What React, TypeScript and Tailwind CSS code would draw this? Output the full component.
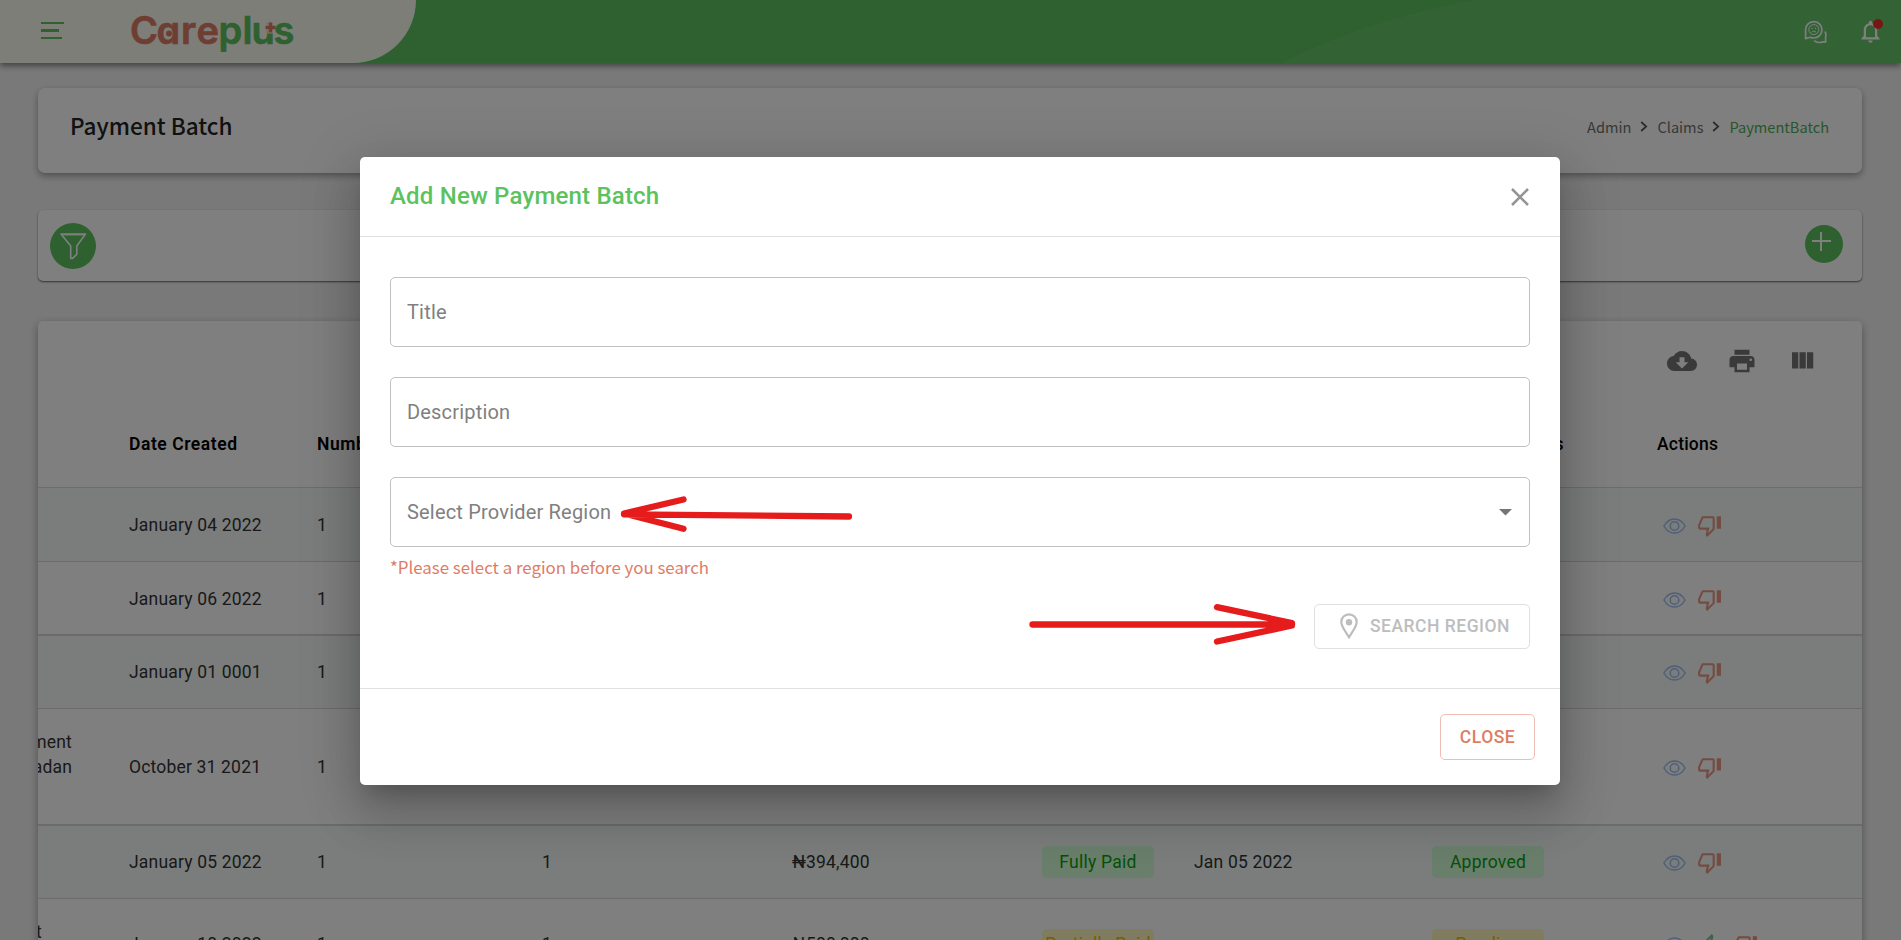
import React from "react";

type Status = { label: string; tone: "green" | "yellow" };

type Row = {
  name: string[];
  nameClass?: string;
  date: string;
  providers: string;
  claims: string;
  amount: string;
  payment: Status;
  paidOn: string;
  approval: Status;
  approve?: boolean;
  rowClass: string;
};

const paid: Status = { label: "Fully Paid", tone: "green" };
const approved: Status = { label: "Approved", tone: "green" };

const rows: Row[] = [
  { name: [], date: "January 04 2022", providers: "1", claims: "1", amount: "₦394,400", payment: paid, paidOn: "Jan 04 2022", approval: approved, rowClass: "h-[74px] border-b bg-[#f5faf7] pt-px" },
  { name: [], date: "January 06 2022", providers: "1", claims: "1", amount: "₦394,400", payment: paid, paidOn: "Jan 06 2022", approval: approved, rowClass: "h-[74px] border-b-2 bg-white pt-[2px]" },
  { name: [], date: "January 01 0001", providers: "1", claims: "1", amount: "₦394,400", payment: paid, paidOn: "Jan 01 2022", approval: approved, rowClass: "h-[73px] border-b bg-[#f5faf7]" },
  { name: ["ment", "adan", "\u00a0"], date: "October 31 2021", providers: "1", claims: "1", amount: "₦394,400", payment: paid, paidOn: "Oct 31 2021", approval: approved, rowClass: "h-[117px] border-b-2 bg-white pt-px" },
  { name: [], date: "January 05 2022", providers: "1", claims: "1", amount: "₦394,400", payment: paid, paidOn: "Jan 05 2022", approval: approved, rowClass: "h-[73px] border-b bg-[#f5faf7]" },
  { name: ["t", "\u00a0"], nameClass: "pr-[30px]", date: "January 10 2022", providers: "1", claims: "1", amount: "₦500,000", payment: { label: "Partially Paid", tone: "yellow" }, paidOn: "", approval: { label: "Pending", tone: "yellow" }, approve: true, rowClass: "h-[92px] border-b bg-white" },
];

const columns = "grid grid-cols-[91px_188px_225px_250px_250px_152px_238px_225px_1fr]";

function Logo() {
  return (
    <svg width="166" height="44" viewBox="0 0 166 44" className="block overflow-visible">
      <g className="font-['Inter',sans-serif] text-[38px] font-semibold [font-feature-settings:'cv11']">
        <text x="-1 25.500 50 65.500" y="34" fill="#de7c66" stroke="#de7c66" strokeWidth="0.700">Care</text>
        <text x="87.500 111.500 120.500 142.500" y="34" fill="#5cc25e" stroke="#5cc25e" strokeWidth="0.700">plus</text>
      </g>
      <circle cx="38" cy="23.500" r="3" fill="#de7c66" />
      <path d="M139.500 11v12.500M133 17.500h10" stroke="#fcfcf2" strokeWidth="6" />
      <path d="M139.500 12.500v10M134.500 17.500h10" stroke="#de7c66" strokeWidth="3.600" />
    </svg>
  );
}

function ChatIcon() {
  return (
    <svg width="24" height="24" viewBox="0 0 24 24" fill="none" stroke="#fff" strokeLinejoin="round">
      <path d="M1.600 18.600V9.600a8.200 8.200 0 1 1 8.200 8.400c-1.400 0-2.600-.3-3.500-.8z" strokeWidth="1.700" />
      <path d="M21 11.500c.9 1.600 1.100 3.500.6 5.400v5h-2.700c-2.800.9-6.400.8-8.900-1.300" strokeWidth="1.700" />
      <circle cx="9.800" cy="9.600" r="5" strokeWidth="1" />
      <path d="M8 7.800v1.200M11.600 7.800v1.200M7.600 12.200c1.200-1.300 3.200-1.300 4.400 0" strokeWidth="1" />
    </svg>
  );
}

function BellIcon() {
  return (
    <svg width="27" height="27" viewBox="0 0 24 24" fill="#fff">
      <path d="M12 22c1.100 0 2-.9 2-2h-4c0 1.100.9 2 2 2zm6-6v-5c0-3.070-1.630-5.640-4.500-6.320V4c0-.83-.67-1.500-1.500-1.500s-1.500.67-1.500 1.500v.68C7.640 5.360 6 7.920 6 11v5l-2 2v1h16v-1l-2-2zm-2 1H8v-6c0-2.480 1.510-4.500 4-4.500s4 2.020 4 4.500v6z" />
    </svg>
  );
}

function FunnelIcon() {
  return (
    <svg width="27" height="27" viewBox="0 0 27 27" fill="none" stroke="#fff" strokeWidth="1.600" strokeLinejoin="round" className="ml-px mt-px">
      <path d="M1 1H25.500L16.800 13V21.200L12.600 25.400H10.700V13Z" />
      <path d="M2.500 1.700H24" strokeWidth="1.400" />
    </svg>
  );
}

function EyeIcon() {
  return (
    <svg width="23" height="16" viewBox="0 0 23 16" fill="none" stroke="#a0bff0" strokeWidth="1.500">
      <path d="M.9 8C3.600 3.300 7.200.9 11.500.9S19.400 3.300 22.100 8c-2.700 4.700-6.300 7.100-10.600 7.100S3.600 12.700.9 8Z" />
      <circle cx="11.500" cy="8" r="4.300" />
    </svg>
  );
}

function ThumbDownIcon() {
  return (
    <svg width="25" height="25" viewBox="0 0 24 24" fill="#e89681">
      <path d="M15 3H6c-.83 0-1.540.5-1.840 1.220l-3.020 7.050c-.09.23-.14.47-.14.73v2c0 1.100.9 2 2 2h6.310l-.95 4.570-.03.32c0 .41.17.79.44 1.060L9.830 23l6.590-6.590c.36-.36.58-.86.58-1.410V5c0-1.100-.9-2-2-2zm0 12l-4.340 4.340L12 14H3v-2l3-7h9v10zm4-12h4v12h-4z" />
    </svg>
  );
}

function ThumbUpIcon() {
  return (
    <svg width="25" height="25" viewBox="0 0 24 24" fill="#6fce80">
      <path d="M9 21h9c.83 0 1.540-.5 1.840-1.220l3.020-7.050c.09-.23.14-.47.14-.73v-2c0-1.100-.9-2-2-2h-6.310l.95-4.570.03-.32c0-.41-.17-.79-.44-1.060L14.170 1 7.580 7.590C7.220 7.950 7 8.450 7 9v10c0 1.100.9 2 2 2zM9 9l4.340-4.340L12 10h9v2l-3 7H9V9zM1 9h4v12H1z" />
    </svg>
  );
}

function Badge({ status }: { status: Status }) {
  const tone = status.tone === "green" ? "bg-[#d4fdd9] text-[#08a00e]" : "bg-[#fff8be] text-[#f5b800]";
  return <span className={`flex h-8 w-28 items-center justify-center whitespace-nowrap rounded-[5px] tracking-[0.25px] ${tone}`}>{status.label}</span>;
}

function Header() {
  return (
    <header className="relative z-10 flex h-[63px] shrink-0 items-center justify-between bg-[#5cc25e] shadow-[0_3px_6px_rgba(0,0,0,0.45)]">
      <svg className="absolute right-0 top-0" width="621" height="63" viewBox="0 0 621 63">
        <path d="M2 63C50 37 122 13 196 0H621V63Z" fill="#66c468" />
      </svg>
      <div className="flex h-full w-[416px] items-center rounded-br-[63px] bg-[#fcfcf2] pl-[41px]">
        <div className="-mt-[2px] flex flex-col gap-[5px]">
          <span className="h-[2px] w-[23px] bg-[#5cc25e]" />
          <span className="h-[3px] w-[18px] bg-[#5cc25e]" />
          <span className="h-[2px] w-[21px] bg-[#5cc25e]" />
        </div>
        <div className="pl-[67px]">
          <Logo />
        </div>
      </div>
      <div className="relative flex items-center gap-[29px] pr-[17px]">
        <ChatIcon />
        <div className="relative">
          <BellIcon />
          <span className="absolute left-[16px] top-px size-[10px] rounded-full bg-[#f02c2c]" />
        </div>
      </div>
    </header>
  );
}

function Chevron() {
  return (
    <svg width="8" height="11" viewBox="0 0 8 11" fill="none" stroke="#555" strokeWidth="1.700">
      <path d="M1.200 1l5 4.500-5 4.500" />
    </svg>
  );
}

function Table() {
  return (
    <section className="mt-[40px] h-[700px] shrink-0 overflow-hidden rounded-[5px] bg-white font-['Roboto',sans-serif] text-[17.5px] tracking-[0.18px] text-[#333] shadow-[0_3px_8px_rgba(0,0,0,0.35)]">
      <div className="flex h-[84px] justify-end gap-[30px] pr-[45px] pt-[25px]">
        <svg width="30" height="30" viewBox="0 0 24 24" fill="#757575">
          <path d="M19.350 10.040C18.670 6.590 15.640 4 12 4 9.110 4 6.600 5.640 5.350 8.040 2.340 8.360 0 10.910 0 14c0 3.310 2.690 6 6 6h13c2.760 0 5-2.240 5-5 0-2.640-2.050-4.780-4.650-4.960zM17 13l-5 5-5-5h3V9h4v4h3z" />
        </svg>
        <svg width="30" height="30" viewBox="0 0 24 24" fill="#757575">
          <path d="M19 8H5c-1.660 0-3 1.340-3 3v6h4v4h12v-4h4v-6c0-1.660-1.340-3-3-3zm-3 11H8v-5h8v5zm3-7c-.55 0-1-.45-1-1s.45-1 1-1 1 .45 1 1-.45 1-1 1zm-1-9H6v4h12V3z" />
        </svg>
        <svg width="30" height="30" viewBox="0 0 24 24" fill="#757575">
          <path d="M10 18h5V5h-5v13zm-6 0h5V5H4v13zM16 5v13h5V5h-5z" />
        </svg>
      </div>
      <div className={`${columns} h-[83px] items-center border-b border-[#d8d8d8] pb-[4px] font-semibold tracking-[0.55px] text-black`}>
        <span />
        <span>Date Created</span>
        <span>Number</span>
        <span>Claims</span>
        <span>Amount</span>
        <span>Payment</span>
        <span>Date</span>
        <span className="w-[132px] text-right">Status</span>
        <span className="font-medium tracking-[0.2px]">Actions</span>
      </div>
      {rows.map((row) => (
        <div key={row.date} className={`${columns} items-center border-[#d6d6d6] ${row.rowClass}`}>
          <div className={`flex w-[34px] flex-col items-end leading-[25px] ${row.nameClass ?? ""}`}>
            {row.name.map((line) => (
              <span key={line}>{line}</span>
            ))}
          </div>
          <span>{row.date}</span>
          <span>{row.providers}</span>
          <span>{row.claims}</span>
          <span>{row.amount}</span>
          <Badge status={row.payment} />
          <span>{row.paidOn}</span>
          <Badge status={row.approval} />
          <div className="flex items-center gap-[11px] pl-[6px] pt-px">
            <EyeIcon />
            {row.approve && <ThumbUpIcon />}
            <ThumbDownIcon />
          </div>
        </div>
      ))}
    </section>
  );
}

function Field({ label, select = false }: { label: string; select?: boolean }) {
  return (
    <div className="flex h-[70px] items-center justify-between rounded-[5px] border border-[#c0c0c0] pl-[16px] pr-[17px] text-[20px] tracking-[0.19px] text-[#808080]">
      <span>{label}</span>
      {select && (
        <svg width="13" height="7" viewBox="0 0 13 7" fill="#757575">
          <path d="M0 0h13L6.500 6.500z" />
        </svg>
      )}
    </div>
  );
}

function Dialog() {
  return (
    <div className="relative flex h-[628px] w-[1200px] flex-col rounded-[5px] bg-white font-['Roboto',sans-serif] shadow-[0_14px_19px_-9px_rgba(0,0,0,0.2),0_30px_48px_4px_rgba(0,0,0,0.14),0_11px_58px_10px_rgba(0,0,0,0.12)]">
      <div className="flex h-20 items-center justify-between border-b border-[#e0e0e0] pl-[30px] pr-[31px]">
        <h2 className="-mt-[2px] text-[24px] font-medium tracking-[0.19px] text-[#5cc25e]">Add New Payment Batch</h2>
        <svg width="18" height="18" viewBox="0 0 18 18" stroke="#949494" strokeWidth="2.500">
          <path d="M1 1l16 16M17 1L1 17" />
        </svg>
      </div>
      <div className="flex h-[452px] flex-col gap-[30px] border-b border-[#e0e0e0] px-[30px] pt-10">
        <Field label="Title" />
        <Field label="Description" />
        <div>
          <Field label="Select Provider Region" select />
          <p className="mt-[7px] font-['Noto_Sans_CJK_SC',sans-serif] text-[16.85px] leading-[26px] text-[#de7c66]">*Please select a region before you search</p>
          <div className="mt-[24px] flex justify-end">
            <button className="flex h-[45px] w-[216px] items-center gap-[12px] rounded-[5px] border border-[#e0e0e0] pl-[25px] text-[17.5px] font-medium tracking-[0.5px] text-[#bdbdbd]">
              <svg width="18" height="26" viewBox="0 0 18 26" fill="none" className="mb-[2px] shrink-0">
                <path d="M9 1.300c-4.300 0-7.700 3.300-7.700 7.600C1.300 13.600 5.800 18.500 9 24.300c3.200-5.800 7.700-10.700 7.700-15.400C16.700 4.600 13.300 1.300 9 1.300Z" stroke="#bdbdbd" strokeWidth="2.200" />
                <circle cx="9" cy="9.200" r="3.200" fill="#bdbdbd" />
              </svg>
              <span className="whitespace-nowrap">SEARCH REGION</span>
            </button>
          </div>
        </div>
      </div>
      <div className="flex justify-end pr-[25px] pt-[25px]">
        <button className="h-[46px] w-[95px] rounded-[5px] border border-[#f0bdb2] text-[17.5px] font-medium tracking-[0.5px] text-[#de7c66]">CLOSE</button>
      </div>
      <svg className="pointer-events-none absolute left-0 top-0" width="1200" height="628" viewBox="0 0 1200 628" fill="none" stroke="#e61b1b" strokeWidth="6.300" strokeLinecap="round" strokeLinejoin="round">
        <path d="M489 359.500L264 357.300M323.500 342.500L264 356.500L323.500 371.800" />
        <path d="M672.500 467.500H931M857 450.200L932 466V468.500L857 484.500" />
      </svg>
    </div>
  );
}

export default function App() {
  return (
    <div className="relative h-[940px] w-full overflow-hidden">
      <div className="flex h-full flex-col bg-[#f3f3f4] font-['Noto_Sans_CJK_SC',sans-serif]">
        <Header />
        <main className="flex flex-col pl-[38px] pr-[39px] pt-[25px]">
          <section className="flex h-[85px] items-center justify-between rounded-[7px] bg-white pb-[6px] pl-[32px] pr-[33px] shadow-[0_3px_7px_rgba(0,0,0,0.35)]">
            <h1 className="-mt-[3px] text-[22.5px] font-medium text-[#222]">Payment Batch</h1>
            <nav className="-mt-[2px] flex items-center gap-[9px] text-[14.6px] text-[#707070]">
              <span>Admin</span>
              <Chevron />
              <span>Claims</span>
              <Chevron />
              <span className="text-[#4fae52]">PaymentBatch</span>
            </nav>
          </section>
          <section className="mt-[37px] flex h-[71px] items-start justify-between rounded-[5px] bg-white pl-[12px] pr-[19px] pt-[13px] shadow-[0_1px_2px_rgba(0,0,0,0.6)]">
            <div className="flex size-[46px] items-center justify-center rounded-full bg-[#5cc25e]">
              <FunnelIcon />
            </div>
            <div className="mt-[2px] size-[38px] rounded-full bg-[#5cc25e] pl-[7px] pt-[7px]">
              <svg width="19" height="19" viewBox="0 0 19 19" stroke="#fff" strokeWidth="2">
                <path d="M9 0v19M0 9h19" />
              </svg>
            </div>
          </section>
          <Table />
        </main>
      </div>
      <div className="absolute inset-0 z-20 flex items-start justify-center bg-black/50 pl-[19px] pt-[157px]">
        <Dialog />
      </div>
    </div>
  );
}
